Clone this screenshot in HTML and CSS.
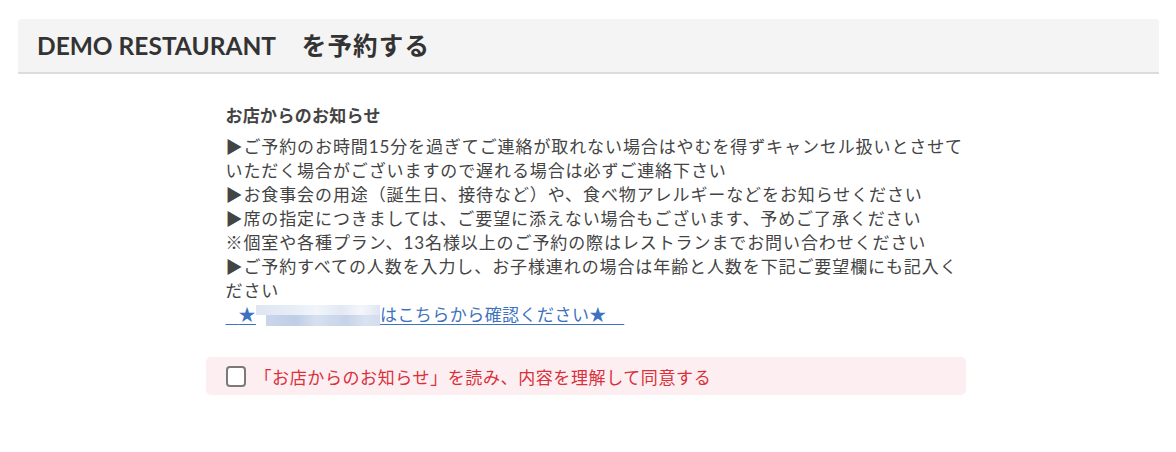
FILE: index.html
```html
<!DOCTYPE html>
<html lang="ja">
<head>
    <meta charset="UTF-8">
    <title>DEMO RESTAURANT を予約する</title>
    <link rel="stylesheet" href="styles.css">
</head>
<body>
    <div class="page">
        <h1 class="page-title">DEMO RESTAURANT<span class="page-title-jp">　を予約する</span></h1>

        <div class="notice">
            <h2 class="notice-title">お店からのお知らせ</h2>
            <p class="notice-body">▶ご予約のお時間15分を過ぎてご連絡が取れない場合はやむを得ずキャンセル扱いとさせていただく場合がございますので遅れる場合は必ずご連絡下さい<br>▶お食事会の用途（誕生日、接待など）や、食べ物アレルギーなどをお知らせください<br>▶席の指定につきましては、ご要望に添えない場合もございます、予めご了承ください<br>※個室や各種プラン、13名様以上のご予約の際はレストランまでお問い合わせください<br>▶ご予約すべての人数を入力し、お子様連れの場合は年齢と人数を下記ご要望欄にも記入ください<br><a class="notice-link" href="#"><span class="lead">　</span>★<span class="blur"></span>はこちらから確認ください★　</a></p>
        </div>

        <label class="agree">
            <input type="checkbox" class="agree-check">
            <span class="agree-text">「お店からのお知らせ」を読み、内容を理解して同意する</span>
        </label>
    </div>
</body>
</html>
```

FILE: styles.css
```css
* {
    margin: 0;
    padding: 0;
    box-sizing: border-box;
}
body {
    font-family: Lato, "Noto Sans CJK JP", sans-serif;
    color: #444;
    background: #fff;
    padding: 19px 17px 0 18px;
}
.page-title {
    background-color: #f4f4f4;
    border-bottom: 2px solid #dcdcdc;
    border-radius: 4px 4px 0 0;
    font-size: 24.5px;
    font-weight: 700;
    color: #333;
    height: 55px;
    line-height: 54px;
    padding-left: 19px;
}
.page-title-jp {
    letter-spacing: 1.2px;
}
.notice {
    width: 760px;
    margin: 30px auto 0;
    padding: 0 2px 0 20px;
    transform: translateX(-3px);
}
.notice-title {
    font-size: 17px;
    font-weight: 700;
    line-height: 24px;
    letter-spacing: 0.3px;
    margin-bottom: 7px;
}
.notice-body {
    font-size: 17px;
    line-height: 24px;
    letter-spacing: 0.9px;
}
.notice-link {
    color: #3d72bf;
    text-decoration: underline;
    text-underline-offset: 3px;
    letter-spacing: 0.45px;
}
.notice-link .lead {
    letter-spacing: -4px;
}
.blur {
    display: inline-block;
    width: 124px;
    height: 21px;
    vertical-align: -5px;
    background:
        linear-gradient(90deg, transparent 0, transparent 10px, #c9d6ea 10px, #bfcee6 40px, #d6e0ef 60px, #c6d3e8 90px, #d9e2f0 110px, #d3ddee 124px) bottom / 100% 11px no-repeat,
        linear-gradient(90deg, #dfe6f2 0, #e8eef7 40px, #f2f5fa 60px, #e2e9f4 85px, #f4f6fb 105px, #dfe6f2 124px) top / 100% 10px no-repeat;
}
.agree {
    display: flex;
    align-items: center;
    gap: 9px;
    width: 760px;
    height: 38px;
    margin: 30px auto 0;
    padding: 0 20px;
    background-color: #fdeef1;
    border-radius: 5px;
    transform: translateX(-3px);
    cursor: pointer;
}
.agree-check {
    appearance: none;
    width: 20px;
    height: 21px;
    border: 2px solid #7a7a7a;
    border-radius: 4px;
    background: #fff;
    flex-shrink: 0;
}
.agree-text {
    color: #d9303a;
    font-size: 17px;
    letter-spacing: 0.6px;
}
```
